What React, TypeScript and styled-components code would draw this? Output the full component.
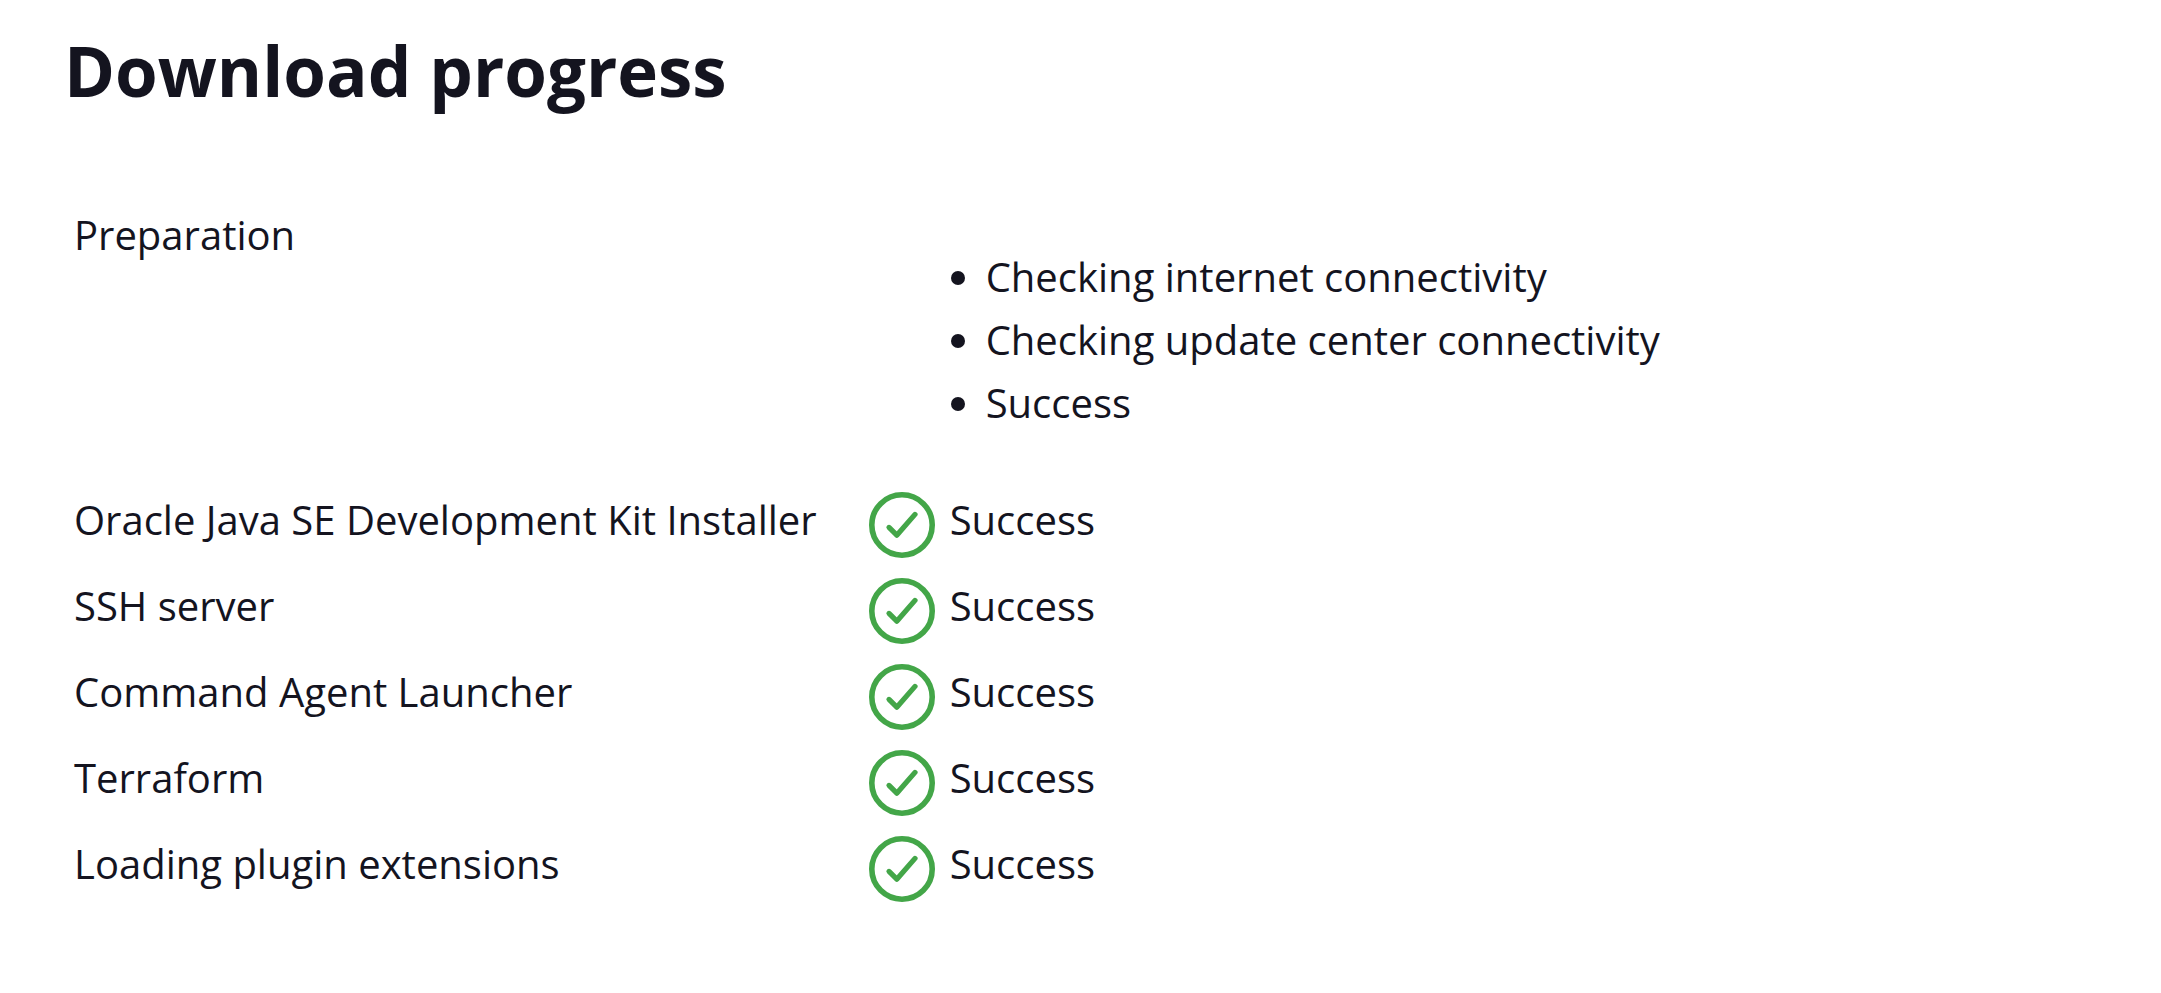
import React from "react";
import styled, { createGlobalStyle } from "styled-components";

const GlobalStyle = createGlobalStyle`
  body {
    margin: 0;
    background: #ffffff;
    color: #14141f;
    font-family: "Segoe UI", "Open Sans", "Noto Sans", sans-serif;
    font-size: 40px;
    font-weight: 400;
    line-height: 63px;
  }
`;

const Page = styled.main`
  padding: 22px 64px;
`;

const Title = styled.h1`
  margin: 0 0 85px;
  font-size: 69px;
  font-weight: 700;
  line-height: 96px;
`;

const StatusTable = styled.table`
  border-spacing: 0;
`;

const Name = styled.th`
  padding: 0 52px 0 10px;
  font-weight: inherit;
  text-align: left;
  vertical-align: top;
  white-space: nowrap;
`;

const Details = styled.td`
  padding: 0;
  vertical-align: top;
`;

const Log = styled.ul`
  margin: 42px 0 54px;
  padding: 0 0 0 117px;
`;

const StatusCell = styled.td`
  height: 86px;
  padding: 0;
  vertical-align: top;
`;

const Status = styled.div`
  display: flex;
  align-items: flex-start;
  gap: 15px;
`;

const CheckIcon = styled.svg`
  width: 66px;
  height: 66px;
  margin-top: 4px;
  flex: none;
  fill: none;
  stroke: #43a648;
`;

const steps = ["Checking internet connectivity", "Checking update center connectivity", "Success"];

const plugins = [
  "Oracle Java SE Development Kit Installer",
  "SSH server",
  "Command Agent Launcher",
  "Terraform",
  "Loading plugin extensions",
];

function Success() {
  return (
    <Status>
      <CheckIcon viewBox="0 0 66 66" aria-hidden="true">
        <circle cx="33" cy="33" r="30.2" strokeWidth="5.6" />
        <path d="M20 35.4 L27.8 43.2 L46 22.4" strokeWidth="5.2" strokeLinecap="round" strokeLinejoin="round" />
      </CheckIcon>
      <span>Success</span>
    </Status>
  );
}

export default function App() {
  return (
    <>
      <GlobalStyle />
      <Page>
        <Title>Download progress</Title>
        <StatusTable>
          <tbody>
            <tr>
              <Name scope="row">Preparation</Name>
              <Details>
                <Log>
                  {steps.map((step) => (
                    <li key={step}>{step}</li>
                  ))}
                </Log>
              </Details>
            </tr>
            {plugins.map((plugin) => (
              <tr key={plugin}>
                <Name scope="row">{plugin}</Name>
                <StatusCell>
                  <Success />
                </StatusCell>
              </tr>
            ))}
          </tbody>
        </StatusTable>
      </Page>
    </>
  );
}
